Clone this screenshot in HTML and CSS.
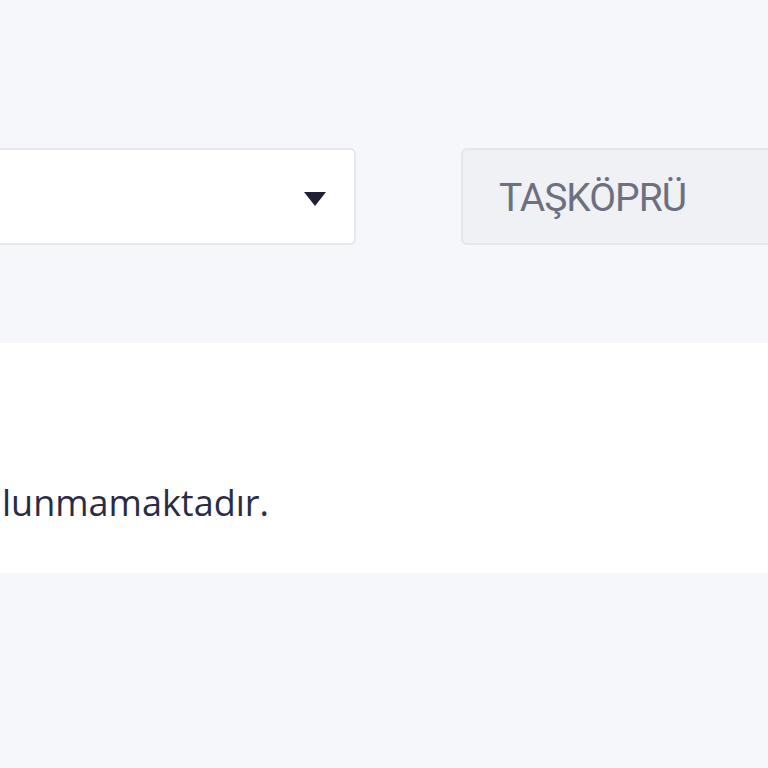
FILE: index.html
```html
<!DOCTYPE html>
<html lang="tr">
<head>
    <meta charset="UTF-8">
    <meta name="viewport" content="width=device-width, initial-scale=1.0">
    <title>Durum</title>
    <link rel="stylesheet" href="styles.css">
</head>
<body>
    <div class="filters">
        <div class="select-box">
            <span class="caret"></span>
        </div>
        <div class="field-box">TAŞKÖPRÜ</div>
    </div>
    <div class="result">
        <p class="empty">lunmamaktadır.</p>
    </div>
</body>
</html>
```

FILE: styles.css
```css
body{
    margin: 0;
    background: #f6f7fa;
    overflow: hidden;
}
.filters{
    display: flex;
    gap: 105px;
    padding-top: 148px;
    height: 97px;
    margin-left: -18px;
    margin-right: -20px;
}
.select-box{
    width: 374px;
    box-sizing: border-box;
    background: #fff;
    border: 2px solid #e6e8ee;
    border-radius: 6px;
    display: flex;
    align-items: center;
    justify-content: flex-end;
    padding-right: 28px;
}
.caret{
    width: 0;
    height: 0;
    border-left: 11px solid transparent;
    border-right: 11px solid transparent;
    border-top: 14px solid #1f2035;
    margin-top: 4px;
}
.field-box{
    flex: 1;
    box-sizing: border-box;
    background: #f0f1f5;
    border: 2px solid #e4e6ec;
    border-radius: 6px;
    display: flex;
    align-items: center;
    padding-left: 36px;
    padding-top: 3px;
    font-family: Roboto, "Liberation Sans", sans-serif;
    font-size: 39px;
    letter-spacing: -1px;
    color: #6c7080;
}
.result{
    margin-top: 98px;
    background: #fff;
    height: 230px;
    display: flex;
    align-items: center;
}
.empty{
    margin: 0;
    padding: 88px 0 0 2px;
    font-family: "Open Sans", sans-serif;
    font-size: 36px;
    color: #2a2c44;
}
```
